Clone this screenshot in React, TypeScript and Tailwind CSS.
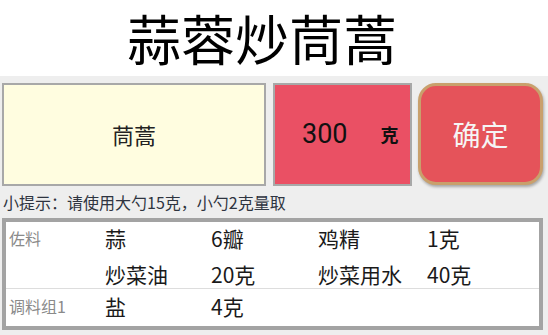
const groups = [
  {
    label: "佐料",
    rows: [
      ["蒜", "6瓣", "鸡精", "1克"],
      ["炒菜油", "20克", "炒菜用水", "40克"],
    ],
  },
  {
    label: "调料组1",
    rows: [["盐", "4克", "", ""]],
  },
];

export default function App() {
  return (
    <div
      className="w-[548px] h-[335px] overflow-hidden flex flex-col bg-[#eeeeee]"
      style={{ fontFamily: '"Noto Sans CJK SC", "Noto Sans", sans-serif' }}
    >
      <div className="h-[76px] bg-white flex items-center justify-center pr-[24px]">
        <h1 className="text-[54px] leading-[64px] text-black">蒜蓉炒茼蒿</h1>
      </div>

      <div className="flex items-start px-[2px] mt-[7px]">
        <div className="w-[264px] h-[103px] border-2 border-[#a8a8a8] bg-[#fffde0] flex items-center justify-center">
          <span className="text-[22px] text-[#222222]">茼蒿</span>
        </div>
        <div className="ml-[7px] w-[139px] h-[103px] border-2 border-[#a8a8a8] bg-[#ea5064] flex items-center">
          <span
            className="ml-[27px] text-[27px] text-[#111111]"
            style={{ fontFamily: "Roboto, sans-serif" }}
          >
            300
          </span>
          <span className="ml-[33px] text-[18px] font-bold text-[#111111]">克</span>
        </div>
        <button className="ml-[6px] w-[125px] h-[102px] rounded-[18px] border-[3px] border-[#c9a06c] bg-[#e5535a] shadow-[1px_2px_3px_rgba(0,0,0,0.3)] flex items-center justify-center">
          <span className="text-[28px] text-[#f5f5f5]">确定</span>
        </button>
      </div>

      <p className="mt-[5px] ml-[3px] text-[16px] leading-[23px] text-[#2e3440]">
        小提示：请使用大勺15克，小勺2克量取
      </p>

      <div className="mt-[4px] ml-[2px] w-[541px] h-[112px] border-4 border-[#a3a3a3] bg-white">
        {groups.map((g, gi) => (
          <div
            key={g.label}
            className={
              gi === 0
                ? "flex pt-[2px] border-b border-[#dddddd]"
                : "flex pt-[3px]"
            }
          >
            <div className="w-[99px] pl-[3px] text-[16px] leading-[28px] text-[#8a8a8a]">
              {g.label}
            </div>
            <div className="flex flex-col gap-[8px]">
              {g.rows.map((r, ri) => (
                <div key={ri} className="flex text-[21px] leading-[28px] text-[#1a1a1a]">
                  <span className="w-[106px]">{r[0]}</span>
                  <span className="w-[107px]">{r[1]}</span>
                  <span className="w-[109px]">{r[2]}</span>
                  <span>{r[3]}</span>
                </div>
              ))}
            </div>
          </div>
        ))}
      </div>
    </div>
  );
}
